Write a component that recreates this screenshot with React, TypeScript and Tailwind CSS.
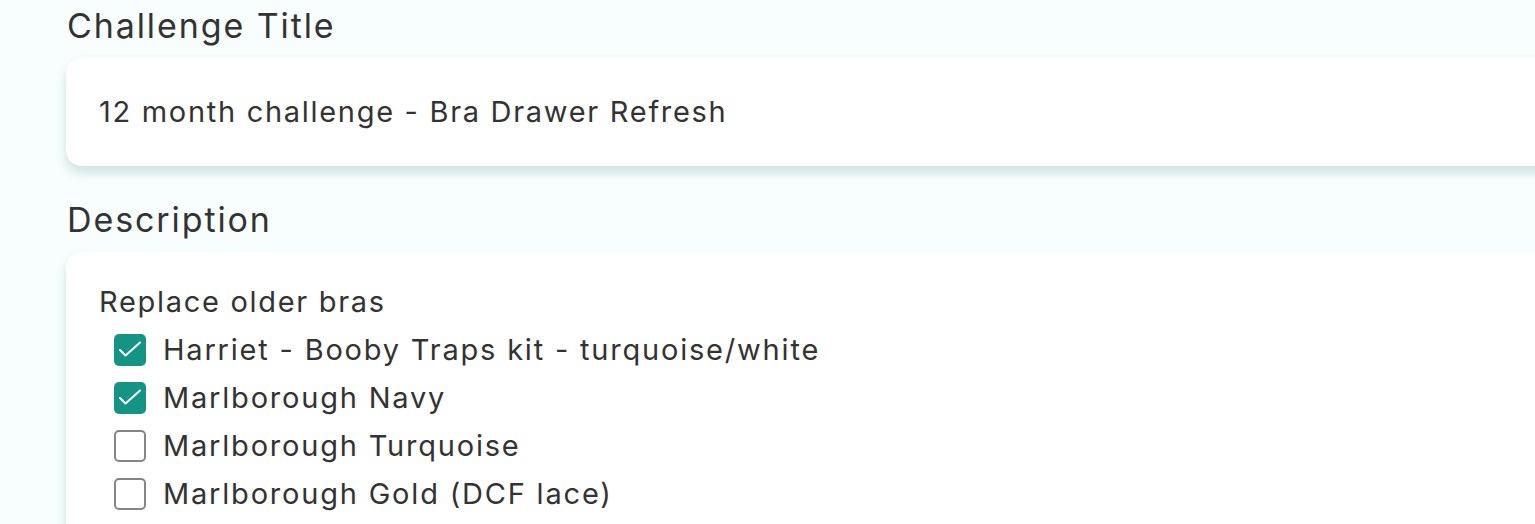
import React from "react";

const items = [
  { label: "Harriet - Booby Traps kit - turquoise/white", done: true },
  { label: "Marlborough Navy", done: true },
  { label: "Marlborough Turquoise", done: false },
  { label: "Marlborough Gold (DCF lace)", done: false },
];

const Check = ({ done }: { done: boolean }) =>
  done ? (
    <span className="flex h-[32px] w-[32px] shrink-0 items-center justify-center rounded-[5px] bg-[#139485]">
      <svg width="32" height="32" viewBox="0 0 32 32" fill="none">
        <path d="M6 16l5.5 5.5L26 8.5" stroke="white" strokeWidth="2" strokeLinecap="round" strokeLinejoin="round" />
      </svg>
    </span>
  ) : (
    <span className="h-[32px] w-[32px] shrink-0 rounded-[5px] border-2 border-[#858585] bg-white" />
  );

export default function App() {
  return (
    <div
      className="h-[524px] overflow-hidden bg-[#f8fefe] pl-[66px] pt-[4px] text-[#333333]"
      style={{ fontFamily: "Inter, 'Noto Sans', sans-serif" }}
    >
      <h2 className="pl-[1px] text-[34px] font-normal leading-[44px] tracking-[1.9px]">Challenge Title</h2>
      <div className="mt-[10px] flex h-[108px] w-[1500px] items-center rounded-[16px] bg-white pl-[33px] shadow-[0_7px_12px_rgba(40,115,115,0.2)]">
        <span className="text-[29px] tracking-[1.7px]">12 month challenge - Bra Drawer Refresh</span>
      </div>
      <h2 className="mt-[32px] pl-[1px] text-[34px] font-normal leading-[44px] tracking-[1.9px]">Description</h2>
      <div className="mt-[10px] w-[1500px] rounded-[16px] bg-white pl-[33px] pt-[30px] pb-[40px] shadow-[0_7px_12px_rgba(40,115,115,0.2)]">
        <p className="text-[29px] leading-[40px] tracking-[1.7px]">Replace older bras</p>
        <ul className="mt-[4px] flex flex-col">
          {items.map((it) => (
            <li key={it.label} className="flex h-[48px] items-center gap-[17px] pl-[15px]">
              <Check done={it.done} />
              <span className="text-[29px] tracking-[1.8px]">{it.label}</span>
            </li>
          ))}
        </ul>
      </div>
    </div>
  );
}
